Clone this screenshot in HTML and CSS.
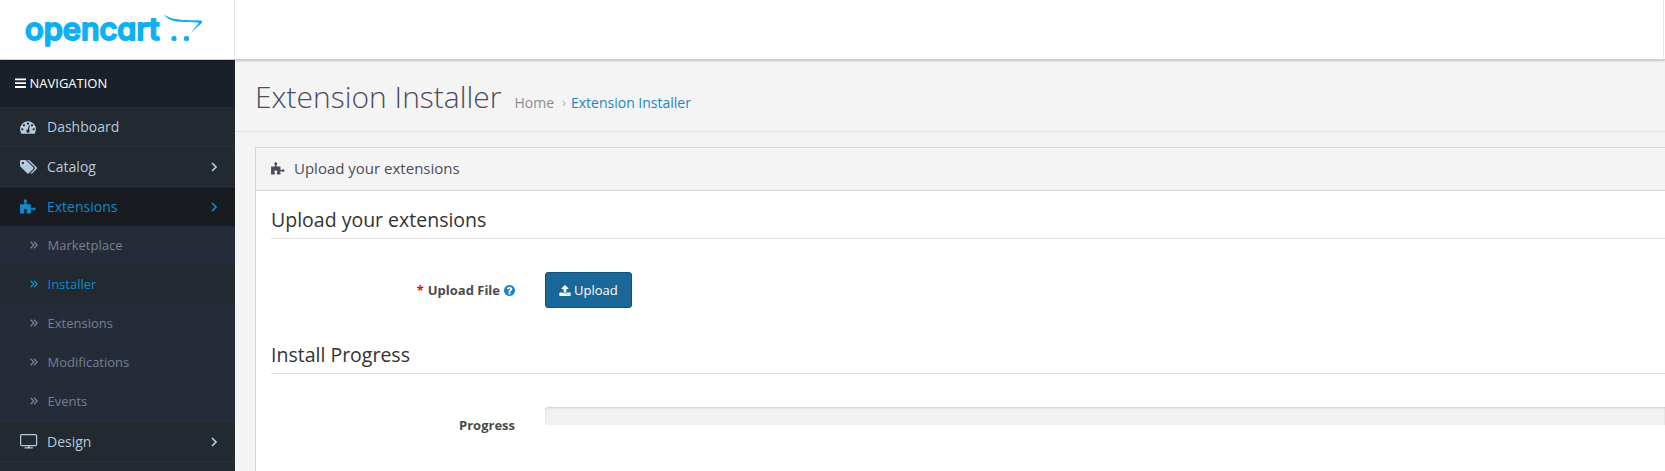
FILE: index.html
```html
<!DOCTYPE html>
<html lang="en">
<head>
<meta charset="utf-8">
<title>Extension Installer</title>
<link rel="stylesheet" href="styles.css">
</head>
<body>
<svg class="defs" width="0" height="0">
  <symbol id="puzzle" viewBox="0 0 16 15"><path d="M0 5.200h3.900c.5 0 .6-.4.6-.8v-.7c-.4-.3-.8-.8-.8-1.600C3.700 1 4.400.2 5.400.2S7.100 1 7.100 2.100c0 .8-.4 1.300-.8 1.600v.7c0 .4.100.8.600.8h3.900v3.500c0 .4.300.5.700.5h1c.3-.4.700-.8 1.400-.8.900 0 1.500.7 1.500 1.500s-.6 1.500-1.500 1.500c-.7 0-1.100-.4-1.400-.8h-1c-.4 0-.7.100-.7.500v3.400H6.700v-2.100c.4-.3.500-.6.500-1 0-.9-.7-1.500-1.700-1.500s-1.700.6-1.700 1.500c0 .4.100.7.500 1v2.100H0z"/></symbol>
  <symbol id="angle" viewBox="0 0 6 10"><path d="M1 1l4 4-4 4" fill="none" stroke="currentColor" stroke-width="1.700"/></symbol>
  <symbol id="double" viewBox="0 0 8 8"><path d="M.6.8L3.800 4 .6 7.200M4 .8L7.200 4 4 7.200" fill="none" stroke="currentColor" stroke-width="1.300"/></symbol>
</svg>
<header class="header">
  <div class="brand">
    <svg class="logo" width="190" height="48" viewBox="20 8 190 48">
      <text class="logo-text" x="25" y="40.200" textLength="134.500" lengthAdjust="spacingAndGlyphs">opencart</text>
      <path d="M164 14c5 5 14 6.300 37.500 6.400 1.500 1 .5 2.300-.5 3.300l-10.500 9.600 7.500-9.300c.8-1.200.3-1.500-1-1.600C177 22.200 168 21.800 164 14z"/>
      <rect x="171.500" y="36" width="5" height="5" rx="1.700"/><rect x="184" y="36" width="5" height="5" rx="1.700"/>
    </svg>
  </div>
  <div class="header-end"></div>
</header>
<div class="body">
  <nav class="sidebar">
    <div class="nav-title"><svg width="11" height="11" viewBox="0 0 11 11"><path d="M0 .5h11v1.800H0zM0 4.300h11v1.800H0zM0 8.100h11v1.800H0z"/></svg><span>NAVIGATION</span></div>
    <a class="item"><svg class="icon" viewBox="0 128 1792 1536"><path fill-rule="evenodd" d="M384 1152q0-53-37.500-90.500t-90.500-37.500-90.500 37.500-37.500 90.500 37.500 90.500 90.500 37.500 90.500-37.500 37.500-90.500zm192-448q0-53-37.500-90.500t-90.500-37.500-90.500 37.500-37.500 90.500 37.500 90.500 90.500 37.500 90.500-37.500 37.500-90.500zm428 481l101-382q6-26-7.500-48.500t-38.500-29.500-48 6.500-30 39.500l-101 382q-60 5-107 43.500t-63 98.500q-20 77 20 146t117 89 146-20 89-117q16-60-6-117t-72-91zm660-33q0-53-37.500-90.500t-90.500-37.500-90.500 37.500-37.500 90.500 37.500 90.500 90.500 37.500 90.500-37.500 37.500-90.500zm-640-640q0-53-37.500-90.500t-90.500-37.500-90.500 37.500-37.500 90.500 37.500 90.500 90.500 37.500 90.500-37.500 37.500-90.500zm448 192q0-53-37.500-90.500t-90.500-37.500-90.500 37.500-37.500 90.500 37.500 90.500 90.500 37.500 90.500-37.500 37.500-90.500zm320 448q0 261-141 483-19 29-54 29h-1402q-35 0-54-29-141-221-141-483 0-182 71-348t191-286 286-191 348-71 348 71 286 191 191 286 71 348z"/></svg><span>Dashboard</span></a>
    <a class="item"><svg class="icon tags" viewBox="0 128 1899 1536"><path fill-rule="evenodd" d="M448 448q0-53-37.500-90.500t-90.500-37.500-90.500 37.500-37.500 90.500 37.500 90.500 90.500 37.500 90.500-37.500 37.500-90.500zm1067 576q0 53-37 90l-491 492q-39 37-91 37-53 0-90-37l-715-716q-38-37-64.500-101t-26.500-117v-416q0-52 38-90t90-38h416q53 0 117 26.500t102 64.500l715 714q37 39 37 91zm384 0q0 53-37 90l-491 492q-39 37-91 37-36 0-59-14t-53-45l470-470q37-37 37-90 0-52-37-91l-715-714q-38-38-102-64.500t-117-26.500h224q53 0 117 26.500t102 64.500l715 714q37 39 37 91z"/></svg><span>Catalog</span><svg class="angle"><use href="#angle"/></svg></a>
    <a class="item active"><svg class="icon puzzle"><use href="#puzzle"/></svg><span>Extensions</span><svg class="angle"><use href="#angle"/></svg></a>
    <div class="submenu">
      <a class="sub"><svg class="double"><use href="#double"/></svg>Marketplace</a>
      <a class="sub current"><svg class="double"><use href="#double"/></svg>Installer</a>
      <a class="sub"><svg class="double"><use href="#double"/></svg>Extensions</a>
      <a class="sub"><svg class="double"><use href="#double"/></svg>Modifications</a>
      <a class="sub"><svg class="double"><use href="#double"/></svg>Events</a>
    </div>
    <a class="item design"><svg class="icon tv" viewBox="0 0 18 15"><rect x=".6" y=".6" width="16" height="11" rx="1.200" fill="none" stroke="currentColor" stroke-width="1.200"/><path d="M8 12h1.500v1.300h3.300v1.200H4.500v-1.200H8z"/></svg><span>Design</span><svg class="angle"><use href="#angle"/></svg></a>
    <a class="item next"></a>
  </nav>
  <main class="main">
    <div class="page-header">
      <h1>Extension Installer</h1>
      <div class="crumbs"><a>Home</a><span class="sep">›</span><a class="here">Extension Installer</a></div>
    </div>
    <section class="panel">
      <div class="panel-head"><svg class="puzzle"><use href="#puzzle"/></svg><h3>Upload your extensions</h3></div>
      <div class="panel-body">
        <h2>Upload your extensions</h2>
        <div class="row upload-row">
          <div class="label"><span class="star">*</span><span>Upload File</span><svg class="help" viewBox="128 128 1536 1536"><path fill-rule="evenodd" d="M1024 1376v-192q0-14-9-23t-23-9h-192q-14 0-23 9t-9 23v192q0 14 9 23t23 9h192q14 0 23-9t9-23zm256-672q0-88-55.500-163t-138.500-116-170-41q-243 0-371 213-15 24 8 42l132 100q7 6 19 6 16 0 25-12 53-68 86-92 34-24 86-24 48 0 85.500 26t37.500 59q0 38-20 61t-68 45q-63 28-115.500 86.500t-52.500 125.500v36q0 14 9 23t23 9h192q14 0 23-9t9-23q0-19 21.500-49.500t54.500-49.500q32-18 49-28.500t46-35 44.500-48 28-60.500 12.500-81zm384 192q0 209-103 385.500t-279.500 279.500-385.500 103-385.500-103-279.500-279.500-103-385.500 103-385.500 279.500-279.500 385.500-103 385.500 103 279.500 279.500 103 385.500z"/></svg></div>
          <button class="btn" type="button"><svg width="12" height="11" viewBox="64 64 1664 1600"><path fill-rule="evenodd" d="M1344 1472q0-26-19-45t-45-19-45 19-19 45 19 45 45 19 45-19 19-45zm256 0q0-26-19-45t-45-19-45 19-19 45 19 45 45 19 45-19 19-45zm128-224v320q0 40-28 68t-68 28h-1472q-40 0-68-28t-28-68v-320q0-40 28-68t68-28h427q21 56 70.500 92t110.500 36h256q61 0 110.500-36t70.500-92h427q40 0 68 28t28 68zm-325-648q-17 40-59 40h-256v448q0 26-19 45t-45 19h-256q-26 0-45-19t-19-45v-448h-256q-42 0-59-40-17-39 14-69l448-448q18-19 45-19t45 19l448 448q31 30 14 69z"/></svg><span>Upload</span></button>
        </div>
        <h2>Install Progress</h2>
        <div class="row progress-row">
          <div class="label">Progress</div>
          <div class="progress"></div>
        </div>
      </div>
    </section>
  </main>
</div>
</body>
</html>
```

FILE: styles.css
```css
* { box-sizing: border-box; }
body { margin: 0; height: 471px; overflow: hidden; background: #f4f4f4; font-family: "Open Sans", sans-serif; font-size: 13px; color: #4c4d5a; }
svg { fill: currentColor; flex: none; display: block; }
.defs { position: absolute; }
h1, h2, h3 { margin: 0; }
.header { position: relative; z-index: 1; display: flex; justify-content: space-between; height: 60px; background: #fff; border-bottom: 1px solid #cdcdcd; box-shadow: 0 1px 2px rgba(0,0,0,.2); }
.brand { width: 235px; padding: 8px 20px; border-right: 1px solid #e6e6e6; color: #0eb0f2; }
.logo-text { font: 500 30px Inter, sans-serif; font-feature-settings: "cv11"; stroke: currentColor; stroke-width: 2px; stroke-linejoin: round; }
.header-end { width: 2px; border-left: 1px solid #e6e6e6; }
.body { display: flex; height: 411px; }
.sidebar { width: 235px; flex: none; background: #222930; overflow: hidden; }
.nav-title { display: flex; align-items: center; gap: 3.5px; height: 47px; padding: 0 0 1px 15px; background: #1a2029; color: #fff; font-size: 13px; }
.item { display: flex; align-items: center; height: 40px; padding: 0 18px 0 20px; border-bottom: 1px solid #2a3140; color: #b3cbdd; font-size: 14px; }
.item span { flex: 1; }
.icon { width: 16px; height: 14px; margin-right: 11px; }
.icon.tags { width: 17px; margin-right: 10px; }
.icon.puzzle { width: 16px; height: 15px; }
.icon.tv { width: 18px; height: 15px; margin-right: 9px; }
.angle { width: 6px; height: 10px; }
.active { height: 39px; border: 0; background: #181b20; color: #118acb; }
.submenu { background: #262b39; }
.sub { display: flex; align-items: center; gap: 10px; height: 39px; padding: 0 0 2px 29.500px; font-size: 13px; color: #76808f; }
.current { background: #222930; color: #118acb; }
.double { width: 8px; height: 8px; }
.design { height: 41px; border-top: 1px solid #2a3140; }
.main { flex: 1; min-width: 0; }
.page-header { display: flex; align-items: baseline; height: 72px; padding: 16px 0 0 20px; border-bottom: 1px solid #e3e3e3; }
h1 { font-size: 30px; font-weight: 300; line-height: 42px; color: #4c4d5a; }
.crumbs { display: flex; margin-left: 13px; font-size: 14px; color: #8c8c8c; }
.sep { margin: 0 5px 0 8px; font-size: 13px; color: #aaa; }
.here { color: #1e84c7; }
.panel { margin: 15px 0 0 20px; height: 340px; background: #fff; border: 1px solid #d6d6d6; border-right: 0; }
.panel-head { display: flex; align-items: center; gap: 9px; height: 43px; padding: 0 0 2px 15px; background: #f4f4f4; border-bottom: 1px solid #d6d6d6; }
.panel-head .puzzle { width: 14px; height: 13px; }
h3 { font-size: 15px; font-weight: 400; }
.panel-body { padding: 15px 0 0 15px; }
h2 { height: 33px; line-height: 28px; border-bottom: 1px solid #dedede; font-size: 19.5px; font-weight: 400; color: #333; }
.row { display: flex; }
.label { display: flex; align-items: center; justify-content: flex-end; width: 244px; margin-right: 30px; font-size: 13px; font-weight: 700; color: #4b4b4b; }
.upload-row { height: 102px; padding: 33px 0; }
.star { margin-right: 4px; color: #f00; }
.help { width: 11px; height: 11px; margin-left: 4px; color: #1e84c7; }
.btn { display: flex; align-items: center; gap: 3px; width: 87px; height: 36px; padding: 0 13px; border: 1px solid #15527a; border-radius: 3px; background: #1a6799; color: #fff; font: 13px "Open Sans", sans-serif; }
.progress-row { padding-top: 33px; }
.progress-row .label { height: 35px; }
.progress { flex: 1; height: 18px; border-radius: 3px 0 0 3px; background: #f2f2f2; box-shadow: inset 0 1px 2px rgba(0,0,0,.15); }
```
